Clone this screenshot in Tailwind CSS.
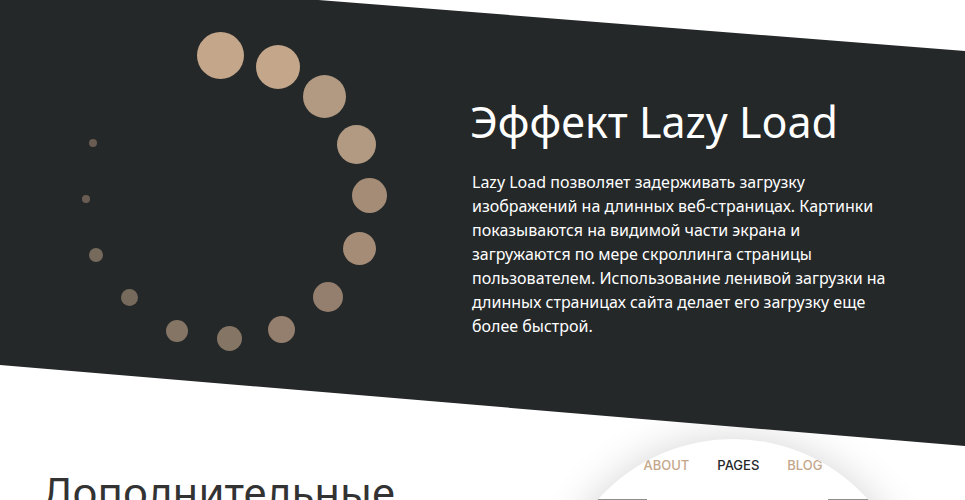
<!DOCTYPE html>
<html lang="ru">
<head>
<meta charset="utf-8">
<meta name="viewport" content="width=device-width, initial-scale=1">
<title>Эффект Lazy Load</title>
<script src="https://cdn.jsdelivr.net/npm/@tailwindcss/browser@4"></script>
</head>
<body class="bg-white font-['Noto_Sans',sans-serif]">
<main class="h-screen overflow-hidden">
  <section class="relative z-10 flex items-start gap-[76px] bg-[#242829] pt-7 pr-12 pb-[88px] pl-[76px] text-white [clip-path:polygon(0_0,33%_0,100%_51px,100%_100%,0_calc(100%-81px))]">
    <svg class="h-[330px] w-[320px] shrink-0" viewBox="76 28 320 330" role="img" aria-label="Загрузка">
      <g fill="#c4a68a"><circle cx="220.5" cy="55.5" r="23.5"/><circle cx="278" cy="67" r="22"/></g>
      <g fill="#b29a82"><circle cx="324.5" cy="96.5" r="21.5"/><circle cx="356.5" cy="144.5" r="19.5"/></g>
      <g fill="#a58c76"><circle cx="369.5" cy="195.5" r="17.5"/><circle cx="359.5" cy="248.5" r="16.5"/></g>
      <g fill="#947f6e"><circle cx="328" cy="297" r="15"/><circle cx="281.5" cy="329.5" r="13.5"/></g>
      <g fill="#857564"><circle cx="229.5" cy="338.5" r="12.5"/><circle cx="177" cy="331" r="11"/></g>
      <g fill="#766a5c"><circle cx="129.5" cy="297.5" r="8.5"/><circle cx="96" cy="255" r="7"/></g>
      <g fill="#695d53"><circle cx="86" cy="199" r="4"/><circle cx="93" cy="143" r="4"/></g>
    </svg>
    <div class="min-w-0 flex-1 pt-[66px]">
      <h2 class="-ml-0.5 text-[43px] leading-[56px] whitespace-nowrap">Эффект Lazy Load</h2>
      <p class="mt-5 text-[16px] leading-6 whitespace-nowrap">Lazy Load позволяет задерживать загрузку<br>изображений на длинных веб-страницах. Картинки<br>показываются на видимой части экрана и<br>загружаются по мере скроллинга страницы<br>пользователем. Использование ленивой загрузки на<br>длинных страницах сайта делает его загрузку еще<br>более быстрой.</p>
    </div>
  </section>

  <section class="-mt-2 flex items-start justify-between pr-[51px] pl-[42px]">
    <h2 class="pt-[26px] text-[42px] leading-[56px] text-[#333]">Дополнительные</h2>
    <div class="mt-px size-[362px] shrink-0 overflow-hidden rounded-full bg-white shadow-[0_0_40px_rgba(0,0,0,0.17)]">
      <nav class="flex justify-center gap-7 pt-4 font-['Inter',sans-serif] text-[13px] leading-5 font-medium text-[#c4a68a]">
        <a href="#about">ABOUT</a>
        <a href="#pages" class="text-[#242829]">PAGES</a>
        <a href="#blog">BLOG</a>
      </nav>
      <div class="mt-6 flex justify-between">
        <div class="h-16 w-[95px] bg-[#8f8d8b]"></div>
        <div class="h-16 w-[86px] bg-[#8f8d8b]"></div>
      </div>
    </div>
  </section>
</main>
</body>
</html>
